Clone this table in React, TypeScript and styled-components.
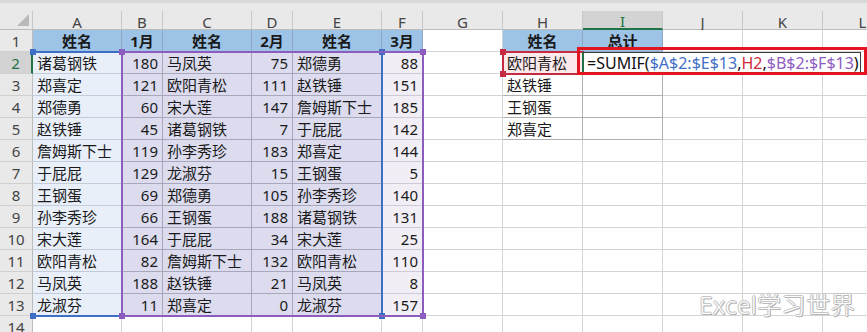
import { Fragment } from 'react';
import styled, { createGlobalStyle } from 'styled-components';

const GlobalStyle = createGlobalStyle`
  html, body {
    margin: 0;
    padding: 0;
    background: #ffffff;
    overflow: hidden;
  }
`;

// column widths: row header, A..L
const COLS = [33, 89, 41, 89, 41, 89, 41, 80, 80, 80, 80, 80, 80];
const LETTERS = ['A', 'B', 'C', 'D', 'E', 'F', 'G', 'H', 'I', 'J', 'K', 'L'];
const TOP = 30;
const ROW = 22;
const colX = (i: number) => COLS.slice(0, i).reduce((a, b) => a + b, 0);
const rowY = (r: number) => TOP + (r - 1) * ROW;

const FONT = `"Noto Sans", "Noto Sans CJK SC", sans-serif`;
const BLUE = '#3f6fc4';
const PURPLE = '#8d5cbf';
const RED = '#c42b40';
const GREEN = '#217346';

const colA = ['诸葛钢铁', '郑喜定', '郑德勇', '赵铁锤', '詹姆斯下士', '于屁屁', '王钢蛋', '孙李秀珍', '宋大莲', '欧阳青松', '马凤英', '龙淑芬'];
const colB = [180, 121, 60, 45, 119, 129, 69, 66, 164, 82, 188, 11];
const colC = ['马凤英', '欧阳青松', '宋大莲', '诸葛钢铁', '孙李秀珍', '龙淑芬', '郑德勇', '王钢蛋', '于屁屁', '詹姆斯下士', '赵铁锤', '郑喜定'];
const colD = [75, 111, 147, 7, 183, 15, 105, 188, 34, 132, 21, 0];
const colE = ['郑德勇', '赵铁锤', '詹姆斯下士', '于屁屁', '郑喜定', '王钢蛋', '孙李秀珍', '诸葛钢铁', '宋大莲', '欧阳青松', '马凤英', '龙淑芬'];
const colF = [88, 151, 185, 142, 144, 5, 140, 131, 25, 110, 8, 157];
const lookup = ['欧阳青松', '赵铁锤', '王钢蛋', '郑喜定'];
const headers: Record<number, string> = { 1: '姓名', 2: '1月', 3: '姓名', 4: '2月', 5: '姓名', 6: '3月', 8: '姓名', 9: '总计' };

type Kind = 'head' | 'a' | 'mid' | 'f' | 'pick' | 'list' | 'plain';
type Align = 'left' | 'right' | 'center';

const kinds: Record<Kind, { bg: string; line: string }> = {
  head: { bg: '#9dc3e6', line: '#8ea8c3' },
  a: { bg: '#e9eff9', line: '#c4cbd9' },
  mid: { bg: '#dcdcee', line: '#a8a8bc' },
  f: { bg: '#f1eef6', line: '#cfcada' },
  pick: { bg: '#fbe8eb', line: '#d4d4d4' },
  list: { bg: '#ffffff', line: '#b0b0b0' },
  plain: { bg: '#ffffff', line: '#d4d4d4' },
};

const Sheet = styled.div`
  position: relative;
  width: 867px;
  height: 332px;
  overflow: hidden;
  background: #ffffff;
  font-family: ${FONT};
`;

const TopBand = styled.div`
  height: 8px;
  background: #e9e9e9;
  border-top: 3px solid #d9d9d9;
`;

const Grid = styled.div`
  display: grid;
  grid-template-columns: ${COLS.map((w) => `${w}px`).join(' ')};
  grid-template-rows: 19px;
  grid-auto-rows: ${ROW}px;
`;

const Corner = styled.div`
  position: relative;
  background: #e9e9e9;
  border-right: 1px solid #c8c8c8;
  border-bottom: 1px solid #bdbdbd;
  &::after {
    content: '';
    position: absolute;
    right: 3px;
    bottom: 3px;
    border-style: solid;
    border-width: 0 0 12px 12px;
    border-color: transparent transparent #b9b9b9 transparent;
  }
`;

const ColHead = styled.div<{ $active?: boolean }>`
  box-sizing: border-box;
  display: flex;
  justify-content: center;
  align-items: center;
  padding-top: 3px;
  font-size: 15px;
  line-height: 16px;
  color: ${(p) => (p.$active ? GREEN : '#444444')};
  background: ${(p) => (p.$active ? '#d3d3d3' : '#e9e9e9')};
  border-right: 1px solid #c8c8c8;
  border-bottom: ${(p) => (p.$active ? `2px solid ${GREEN}` : '1px solid #bdbdbd')};
`;

const RowHead = styled.div<{ $active?: boolean }>`
  box-sizing: border-box;
  display: flex;
  justify-content: center;
  align-items: center;
  font-size: 15px;
  color: ${(p) => (p.$active ? GREEN : '#444444')};
  background: ${(p) => (p.$active ? '#d3d3d3' : '#e9e9e9')};
  border-bottom: 1px solid #d0d0d0;
  border-right: ${(p) => (p.$active ? `2px solid ${GREEN}` : '1px solid #bdbdbd')};
`;

const Cell = styled.div<{ $kind: Kind; $align: Align; $bold?: boolean }>`
  box-sizing: border-box;
  display: flex;
  align-items: center;
  justify-content: ${(p) => (p.$align === 'left' ? 'flex-start' : p.$align === 'right' ? 'flex-end' : 'center')};
  padding: 0 4px;
  font-size: 15px;
  font-weight: ${(p) => (p.$bold ? 700 : 400)};
  color: #1a1a1a;
  white-space: nowrap;
  background: ${(p) => kinds[p.$kind].bg};
  border-right: 1px solid ${(p) => kinds[p.$kind].line};
  border-bottom: 1px solid ${(p) => kinds[p.$kind].line};
`;

// a highlighted reference range drawn over the cells, with its corner handles
const Frame = styled.div<{ $x: number; $y: number; $w: number; $h: number; $c: string; $noLeft?: boolean; $noRight?: boolean }>`
  position: absolute;
  left: ${(p) => p.$x - 1}px;
  top: ${(p) => p.$y - 1}px;
  width: ${(p) => p.$w + 2}px;
  height: ${(p) => p.$h + 2}px;
  box-sizing: border-box;
  border: 2px solid ${(p) => p.$c};
  border-left-color: ${(p) => (p.$noLeft ? 'transparent' : p.$c)};
  border-right-color: ${(p) => (p.$noRight ? 'transparent' : p.$c)};
  pointer-events: none;
`;

const Handle = styled.span<{ $c: string; $at: 'tl' | 'tr' | 'bl' | 'br' }>`
  position: absolute;
  width: 6px;
  height: 6px;
  background: ${(p) => p.$c};
  ${(p) => (p.$at[0] === 't' ? 'top: -4px;' : 'bottom: -4px;')}
  ${(p) => (p.$at[1] === 'l' ? 'left: -4px;' : 'right: -4px;')}
`;

const EditBox = styled.div`
  position: absolute;
  left: ${colX(9) - 1}px;
  top: ${rowY(2)}px;
  width: 279px;
  height: 21px;
  box-sizing: border-box;
  background: #ffffff;
  border: 1px solid #3d3d3d;
  border-left: 2px solid ${GREEN};
  padding-left: 3px;
  display: flex;
  align-items: center;
  font-size: 16px;
  color: #111111;
  white-space: nowrap;
`;

const Ref = styled.span<{ $c: string }>`
  color: ${(p) => p.$c};
`;

const Caret = styled.span`
  display: inline-block;
  width: 1px;
  height: 16px;
  margin-left: 2px;
  background: #000000;
`;

const Callout = styled.div`
  position: absolute;
  left: 577px;
  top: 47px;
  width: 290px;
  height: 28px;
  box-sizing: border-box;
  border: 3px solid #e3161f;
`;

const Watermark = styled.div`
  position: absolute;
  right: 12px;
  bottom: 14px;
  font-size: 24px;
  line-height: 26px;
  font-weight: 300;
  color: #fdfdfd;
  text-shadow: 1px 0 0 #b8b8b8, -1px 0 0 #c4c4c4, 0 1px 0 #b8b8b8, 0 -1px 0 #c4c4c4, 1px 1px 0 #a8a8a8;
  letter-spacing: 0.5px;
`;

function cellOf(r: number, c: number): { text: string; kind: Kind; align: Align; bold?: boolean } {
  if (r === 1) {
    if (headers[c]) return { text: headers[c], kind: 'head', align: 'center', bold: true };
    return { text: '', kind: 'plain', align: 'left' };
  }
  const i = r - 2;
  if (r <= 13) {
    if (c === 1) return { text: colA[i], kind: 'a', align: 'left' };
    if (c === 2) return { text: String(colB[i]), kind: 'mid', align: 'right' };
    if (c === 3) return { text: colC[i], kind: 'mid', align: 'left' };
    if (c === 4) return { text: String(colD[i]), kind: 'mid', align: 'right' };
    if (c === 5) return { text: colE[i], kind: 'mid', align: 'left' };
    if (c === 6) return { text: String(colF[i]), kind: 'f', align: 'right' };
  }
  if (r === 2 && c === 8) return { text: lookup[0], kind: 'pick', align: 'left' };
  if (r >= 3 && r <= 5 && (c === 8 || c === 9)) return { text: c === 8 ? lookup[i] : '', kind: 'list', align: 'left' };
  return { text: '', kind: 'plain', align: 'left' };
}

export default function App() {
  const rows = Array.from({ length: 14 }, (_, k) => k + 1);
  const y2 = rowY(2);
  const dataH = rowY(14) - y2;

  return (
    <>
      <GlobalStyle />
      <Sheet>
        <TopBand />
        <Grid>
          <Corner />
          {LETTERS.map((l) => (
            <ColHead key={l} $active={l === 'I'}>{l}</ColHead>
          ))}
          {rows.map((r) => (
            <Fragment key={r}>
              <RowHead $active={r === 2}>{r}</RowHead>
              {LETTERS.map((_, k) => {
                const cell = cellOf(r, k + 1);
                return (
                  <Cell key={k} $kind={cell.kind} $align={cell.align} $bold={cell.bold}>
                    {cell.text}
                  </Cell>
                );
              })}
            </Fragment>
          ))}
        </Grid>

        {/* criteria range $A$2:$E$13 */}
        <Frame $x={colX(1)} $y={y2} $w={colX(6) - colX(1)} $h={dataH} $c={BLUE} $noLeft>
          <Handle $c={BLUE} $at="tl" />
          <Handle $c={BLUE} $at="tr" />
          <Handle $c={BLUE} $at="bl" />
          <Handle $c={BLUE} $at="br" />
        </Frame>
        {/* sum range $B$2:$F$13 */}
        <Frame $x={colX(2)} $y={y2} $w={colX(7) - colX(2)} $h={dataH} $c={PURPLE}>
          <Handle $c={PURPLE} $at="tl" />
          <Handle $c={PURPLE} $at="tr" />
          <Handle $c={PURPLE} $at="bl" />
          <Handle $c={PURPLE} $at="br" />
        </Frame>
        {/* criteria cell H2 */}
        <Frame $x={colX(8)} $y={y2} $w={80} $h={ROW} $c={RED}>
          <Handle $c={RED} $at="tl" />
          <Handle $c={RED} $at="bl" />
        </Frame>

        <EditBox>
          =SUMIF(<Ref $c={BLUE}>$A$2:$E$13</Ref>,<Ref $c="#d0293b">H2</Ref>,<Ref $c={PURPLE}>$B$2:$F$13</Ref>)
          <Caret />
        </EditBox>
        <Callout />

        <Watermark>Excel学习世界</Watermark>
      </Sheet>
    </>
  );
}
